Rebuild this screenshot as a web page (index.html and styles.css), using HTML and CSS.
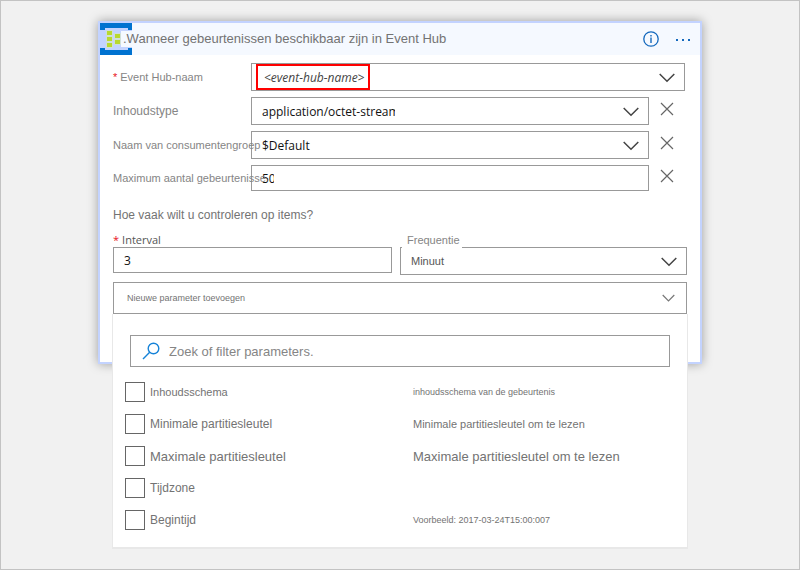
FILE: index.html
```html
<!DOCTYPE html>
<html lang="nl">
<head>
<meta charset="utf-8">
<meta name="viewport" content="width=device-width, initial-scale=1">
<title>Event Hub</title>
<link rel="stylesheet" href="styles.css">
</head>
<body>
<main class="page">
  <section class="card">
    <header class="card-header">
      <svg class="logo" viewBox="0 0 32 32" aria-hidden="true">
        <rect width="32" height="32" fill="#c3d3ff"/>
        <path d="M0 0H32V7H28V5H5V7H0ZM0 32H32V25H28V27H5V25H0Z" fill="#0072d0"/>
        <path d="M6 7h7v18H6zM14 10h7v12h-7z" fill="#d0dfd8"/>
        <path d="M7 8h5v4H7zM7 14h5v4H7zM7 20h5v4H7zM15 11h5v4h-5zM15 17h5v4h-5z" fill="#b8d92f"/>
      </svg>
      <h1 class="title">.Wanneer gebeurtenissen beschikbaar zijn in Event Hub</h1>
      <button class="icon-button" type="button" aria-label="Info">
        <svg width="16" height="16" viewBox="0 0 16 16"><circle cx="8" cy="8" r="7.2" fill="none" stroke="#1368bd" stroke-width="1.3"/><path d="M8 6.500V12M8 4V5.500" stroke="#1368bd" stroke-width="1.4"/></svg>
      </button>
      <button class="icon-button" type="button" aria-label="Menu">
        <svg width="16" height="16" viewBox="0 0 16 16"><path d="M1 8h2v2H1zM7 8h2v2H7zM13 8h2v2h-2z" fill="#1368bd"/></svg>
      </button>
    </header>

    <form class="card-body">
      <div class="row">
        <label class="label small" for="hub"><span class="star">*</span>Event Hub-naam</label>
        <div class="box">
          <select class="control placeholder" id="hub"><option>&lt;event-hub-name&gt;</option></select>
          <span class="highlight"></span>
          <svg class="chevron" viewBox="0 0 16 10"><path d="M.7 1 8 8.300 15.300 1"/></svg>
        </div>
      </div>
      <div class="row">
        <label class="label medium" for="type">Inhoudstype</label>
        <div class="box">
          <select class="control clip-stream" id="type"><option>application/octet-stream</option></select>
          <svg class="chevron" viewBox="0 0 16 10"><path d="M.7 1 8 8.300 15.300 1"/></svg>
        </div>
        <button class="remove" type="button" aria-label="Verwijderen"><svg width="14" height="14" viewBox="0 0 14 14"><path d="M1 1 13 13M13 1 1 13"/></svg></button>
      </div>
      <div class="row">
        <label class="label small" for="group">Naam van consumentengroep</label>
        <div class="box">
          <select class="control" id="group"><option>$Default</option></select>
          <svg class="chevron" viewBox="0 0 16 10"><path d="M.7 1 8 8.300 15.300 1"/></svg>
        </div>
        <button class="remove" type="button" aria-label="Verwijderen"><svg width="14" height="14" viewBox="0 0 14 14"><path d="M1 1 13 13M13 1 1 13"/></svg></button>
      </div>
      <div class="row">
        <label class="label small" for="max">Maximum aantal gebeurtenisse</label>
        <div class="box short">
          <input class="control clip-count" id="max" type="text" value="50">
        </div>
        <button class="remove" type="button" aria-label="Verwijderen"><svg width="14" height="14" viewBox="0 0 14 14"><path d="M1 1 13 13M13 1 1 13"/></svg></button>
      </div>

      <p class="question">Hoe vaak wilt u controleren op items?</p>

      <div class="schedule">
        <div class="field">
          <label class="interval-label" for="interval"><span class="star">*</span>Interval</label>
          <div class="box short"><input class="control" id="interval" type="text" value="3"></div>
        </div>
        <div class="field">
          <label class="frequency-label" for="frequency">Frequentie</label>
          <div class="box">
            <select class="control arial" id="frequency"><option>Minuut</option></select>
            <svg class="chevron" viewBox="0 0 16 10"><path d="M.7 1 8 8.300 15.300 1"/></svg>
          </div>
        </div>
      </div>

      <div class="adder">
        <button class="add" type="button" aria-expanded="true">Nieuwe parameter toevoegen
          <svg width="13" height="8" viewBox="0 0 13 8"><path d="M.7 1 6.500 6.800 12.300 1"/></svg>
        </button>
        <div class="menu">
          <div class="search">
            <svg width="18" height="18" viewBox="0 0 18 18"><circle cx="11.500" cy="6.500" r="5.300"/><path d="M7.700 10.300 1 17"/></svg>
            <input class="search-input" type="text" placeholder="Zoek of filter parameters." aria-label="Zoek of filter parameters.">
          </div>
          <ul class="options">
            <li class="option"><label class="check small"><input type="checkbox">Inhoudsschema</label><span class="note tiny">inhoudsschema van de gebeurtenis</span></li>
            <li class="option"><label class="check medium"><input type="checkbox">Minimale partitiesleutel</label><span class="note small">Minimale partitiesleutel om te lezen</span></li>
            <li class="option"><label class="check large"><input type="checkbox">Maximale partitiesleutel</label><span class="note large">Maximale partitiesleutel om te lezen</span></li>
            <li class="option"><label class="check medium"><input type="checkbox">Tijdzone</label></li>
            <li class="option"><label class="check medium"><input type="checkbox">Begintijd</label><span class="note tiny">Voorbeeld: 2017-03-24T15:00:007</span></li>
          </ul>
        </div>
      </div>
    </form>
  </section>
</main>
</body>
</html>
```
FILE: styles.css
```css
* { box-sizing: border-box; }
body {
  margin: 0;
  font-family: "Liberation Sans", Arial, sans-serif;
  color: #737373;
}
button, input, select { font: inherit; color: inherit; margin: 0; }
button { padding: 0; border: 0; background: none; }
svg { display: block; flex: none; }

.page {
  min-height: 100vh;
  padding: 20px 97px;
  border: 1px solid #c3c3c3;
  background: #f1f1f1;
}
.card {
  border: 2px solid #c3d3ff;
  background: #fff;
  box-shadow: 0 0 10px rgba(0, 0, 0, 0.35);
}
.card-header {
  display: flex;
  align-items: center;
  gap: 16px;
  height: 32px;
  padding-right: 9px;
  background: #f5f9ff;
}
.logo { width: 32px; height: 32px; }
.title {
  flex: 1;
  margin: 0 0 0 -27px;
  padding-left: 2px;
  background: #f5f9ff;
  font-size: 13px;
  line-height: 16px;
  font-weight: 400;
  white-space: nowrap;
}

.card-body { padding: 8px 13px 48px; }
.row {
  display: grid;
  grid-template-columns: 138px 1fr 38px;
  align-items: center;
  margin-bottom: 6px;
}
.row:first-child .box { grid-column: 2 / 4; margin-right: 2px; }
.label { z-index: 1; white-space: nowrap; color: #858585; }
.tiny { font-size: 9px; }
.small { font-size: 11px; }
.medium { font-size: 12px; }
.large { font-size: 13px; }
.star { color: #e81123; margin-right: 3px; }

.box {
  position: relative;
  height: 28px;
  border: 1px solid #999;
  background: #fff;
}
.box.short { height: 26px; }
.control {
  display: block;
  width: 100%;
  height: 100%;
  padding: 0 10px;
  border: 0;
  outline: 0;
  appearance: none;
  background: transparent;
  font-family: "Open Sans", sans-serif;
  font-size: 12px;
  color: #111;
}
.placeholder { padding-left: 12px; font-style: italic; color: #444; }
.clip-stream { padding-right: calc(100% - 143px); }
.clip-count { padding-right: calc(100% - 22px); }
.arial { font-family: "Liberation Sans", sans-serif; font-size: 11px; color: #555; }
.highlight {
  position: absolute;
  top: 0;
  left: 4px;
  width: 114px;
  height: 26px;
  border: 2px solid #f00;
  pointer-events: none;
}
.chevron {
  position: absolute;
  top: 9px;
  right: 9px;
  width: 16px;
  height: 10px;
  pointer-events: none;
}
.chevron path { fill: none; stroke: #444; stroke-width: 1.5; }
.remove { margin: 0 0 4px 11px; }
.remove path { stroke: #666; stroke-width: 1.2; }

.question { margin: 15px 0 9px; font-size: 12px; line-height: 18px; }

.schedule {
  display: grid;
  grid-template-columns: 279fr 287fr;
  gap: 8px;
}
.interval-label, .frequency-label { display: block; font-size: 11px; line-height: 14px; }
.interval-label { font-family: "Open Sans", sans-serif; color: #555; }
.frequency-label {
  position: relative;
  z-index: 1;
  width: 60px;
  margin: 0 0 -2px 2px;
  padding: 0 0 2px 5px;
  background: #fff;
  color: #858585;
}

.adder { position: relative; margin-top: 7px; }
.add {
  display: flex;
  align-items: center;
  justify-content: space-between;
  width: 100%;
  height: 32px;
  padding: 0 11px 0 13px;
  border: 1px solid #999;
  font-size: 9px;
}
.add path { fill: none; stroke: #777; stroke-width: 1.2; }
.menu {
  position: absolute;
  top: 100%;
  left: 0;
  right: 0;
  padding: 21px 17px 17px 12px;
  background: #fff;
  box-shadow: 0 1px 0 1px #e8e8e8;
}
.search {
  display: flex;
  align-items: center;
  gap: 9px;
  height: 32px;
  margin-left: 5px;
  padding-left: 11px;
  border: 1px solid #999;
}
.search svg { fill: none; stroke: #1683d8; stroke-width: 1.4; }
.search-input { flex: 1; min-width: 0; padding: 0; border: 0; outline: 0; background: none; font-size: 13px; }
.search-input::placeholder { color: #858585; opacity: 1; }
.options { display: grid; gap: 12px; margin: 15px 0 0; padding: 0; list-style: none; }
.option { display: grid; grid-template-columns: 288fr 257fr; align-items: center; height: 20px; }
.check { display: flex; align-items: center; gap: 5px; }
.check input { width: 20px; height: 20px; appearance: none; border: 1px solid #666; background: #fff; }
```
